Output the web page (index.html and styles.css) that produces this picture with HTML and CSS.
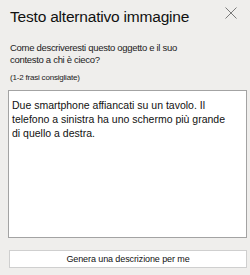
FILE: index.html
```html
<!DOCTYPE html>
<html lang="it">
<head>
<meta charset="utf-8">
<link rel="stylesheet" href="styles.css">
</head>
<body>
<div class="pane">
  <div class="header">
    <h1 class="title">Testo alternativo immagine</h1>
    <button class="close" aria-label="Chiudi">
      <svg width="12" height="12" viewBox="0 0 12 12"><path d="M0.5 0.5L11.5 11.5M11.5 0.5L0.5 11.5" stroke="#7a7a7a" stroke-width="1" fill="none"/></svg>
    </button>
  </div>
  <p class="question">Come descriveresti questo oggetto e il suo contesto a chi è cieco?</p>
  <p class="hint">(1-2 frasi consigliate)</p>
  <div class="textbox">Due smartphone affiancati su un tavolo. Il telefono a sinistra ha uno schermo più grande di quello a destra.</div>
  <button class="generate">Genera una descrizione per me</button>
</div>
</body>
</html>
```

FILE: styles.css
```css
html, body {
  margin: 0;
  padding: 0;
  background: #efeeec;
}
body {
  font-family: "Liberation Sans", Arial, sans-serif;
  color: #1b1b1b;
}
.pane {
  width: 250px;
  height: 275px;
  box-sizing: border-box;
  padding: 0 3px 0 8px;
  display: flex;
  flex-direction: column;
}
.header {
  display: flex;
  justify-content: space-between;
  align-items: flex-start;
  height: 42px;
}
.title {
  margin: 7px 0 0 2px;
  font-size: 15.5px;
  letter-spacing: -0.2px;
  font-weight: normal;
  line-height: 19px;
  color: #111;
}
.close {
  margin: 7px 10px 0 0;
  padding: 0;
  border: 0;
  background: none;
  width: 12px;
  height: 12px;
  display: block;
}
.close svg { display: block; }
.question {
  margin: 0 0 0 2px;
  font-size: 9.5px;
  letter-spacing: -0.3px;
  line-height: 12px;
  width: 175px;
}
.hint {
  margin: 7px 0 0 2px;
  font-size: 8px;
  letter-spacing: -0.2px;
  line-height: 10px;
}
.textbox {
  margin-top: 7px;
  height: 148px;
  box-sizing: border-box;
  background: #fff;
  border: 1px solid #a3a3a3;
  padding: 7px 16px 0 3px;
  font-size: 10.5px;
  line-height: 14px;
  color: #111;
}
.generate {
  margin: 12px 0 0 1px;
  height: 18px;
  box-sizing: border-box;
  background: #fff;
  border: 1px solid #cfcfcf;
  font-family: "Liberation Sans", Arial, sans-serif;
  font-size: 9px;
  letter-spacing: -0.1px;
  color: #111;
  padding: 0;
}
```
